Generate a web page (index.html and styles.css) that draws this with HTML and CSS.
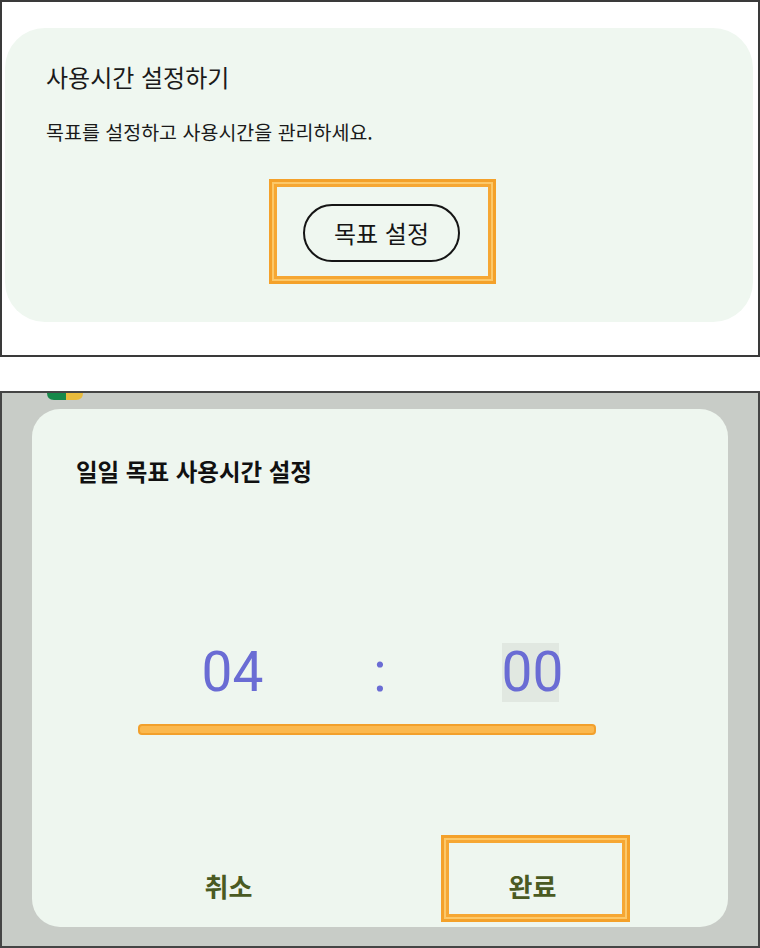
FILE: index.html
```html
<!DOCTYPE html>
<html lang="ko">
<head>
<meta charset="utf-8">
<title>사용시간 설정</title>
<link rel="stylesheet" href="styles.css">
</head>
<body>
<section class="panel panel-top">
  <div class="card">
    <h1 class="card-title">사용시간 설정하기</h1>
    <p class="card-desc">목표를 설정하고 사용시간을 관리하세요.</p>
    <div class="mark mark-goal">
      <button class="pill" type="button">목표 설정</button>
    </div>
  </div>
</section>
<section class="panel panel-bottom">
  <div class="app-icon">
    <svg width="36" height="7" viewBox="0 0 36 7">
      <path d="M0 0 H19 V7 H7 Q0 7 0 0 Z" fill="#17894a"/>
      <path d="M19 0 H36 Q36 7 29 7 H19 Z" fill="#e9bb3c"/>
    </svg>
  </div>
  <div class="dialog">
    <h2 class="dialog-title">일일 목표 사용시간 설정</h2>
    <div class="time-row">
      <span class="num">04</span>
      <span class="colon">:</span>
      <span class="num num-active">00</span>
    </div>
    <div class="marker-line"></div>
    <div class="actions">
      <div class="action"><span>취소</span></div>
      <div class="action action-done mark"><span>완료</span></div>
    </div>
  </div>
</section>
</body>
</html>
```
FILE: styles.css
```css
html, body {
  margin: 0;
  padding: 0;
  background: #ffffff;
}

body {
  font-family: "Noto Sans CJK KR", "Noto Sans", sans-serif;
  color: #1a1a1a;
  width: 760px;
}

.panel {
  box-sizing: border-box;
  width: 760px;
}

/* ---------- top panel ---------- */
.panel-top {
  height: 357px;
  border: 2px solid #3a3a3a;
  padding: 26px 5px 0 3px;
  background: #ffffff;
}

.card {
  box-sizing: border-box;
  height: 294px;
  background: #eff7f0;
  border-radius: 40px;
  padding: 34px 0 38px 0;
  display: flex;
  flex-direction: column;
}

.card-title {
  margin: 0 0 0 41px;
  font-size: 24px;
  font-weight: 400;
  line-height: 30px;
  color: #1a1a1a;
}

.card-desc {
  margin: 27px 0 0 41px;
  font-size: 19.5px;
  line-height: 26px;
  color: #1a1a1a;
}

.mark {
  box-sizing: border-box;
  border: 3px solid #f4a12a;
  box-shadow: inset 0 0 0 2px #fcc869, inset 0 0 0 5px #f6a733;
}

.mark-goal {
  margin-top: 34px;
  width: 227px;
  height: 105px;
  align-self: center;
  margin-left: 7px;
  display: flex;
  align-items: center;
  justify-content: center;
  padding: 2px 2px 0 0;
}

.pill {
  box-sizing: border-box;
  width: 157px;
  height: 58px;
  border: 2px solid #151515;
  border-radius: 29px;
  background: transparent;
  font-family: "Noto Sans CJK KR", "Noto Sans", sans-serif;
  font-size: 24px;
  line-height: 30px;
  color: #151515;
  padding: 0;
}

/* ---------- bottom panel ---------- */
.panel-bottom {
  margin-top: 34px;
  height: 557px;
  border: 2px solid #454545;
  background: #c8ccc7;
  padding: 0 30px;
}

.app-icon {
  height: 7px;
  margin-left: 15px;
  line-height: 0;
}

.dialog {
  box-sizing: border-box;
  margin-top: 9px;
  height: 518px;
  background: #eef6ef;
  border-radius: 28px;
  padding: 47px 0 5px 0;
  display: flex;
  flex-direction: column;
}

.dialog-title {
  margin: 0 0 0 44px;
  font-size: 23.5px;
  font-weight: 700;
  line-height: 30px;
  color: #111111;
}

.time-row {
  margin-top: 157px;
  height: 59px;
  display: flex;
  justify-content: center;
  align-items: stretch;
  font-family: "Roboto", "Liberation Sans", sans-serif;
  font-size: 55px;
  line-height: 59px;
  color: #6a6cd4;
}

.num {
  width: 57px;
  text-align: center;
}

.num-active {
  background: #e1e8e1;
}

.colon {
  width: 243px;
  text-align: center;
}

.marker-line {
  box-sizing: border-box;
  margin: 22px 0 0 106px;
  width: 458px;
  height: 11px;
  background: #fbb84e;
  border: 2px solid #f2a02c;
  border-radius: 4px;
}

.actions {
  margin-top: 100px;
  display: flex;
  padding-left: 102px;
  gap: 118px;
}

.action {
  box-sizing: border-box;
  width: 189px;
  height: 87px;
  border: 3px solid transparent;
  padding-top: 33px;
  text-align: center;
  font-size: 26px;
  font-weight: 700;
  line-height: 30px;
  color: #4a5a22;
}

.action-done {
  padding-right: 6px;
}

.action.mark {
  border-color: #f4a12a;
}
```
